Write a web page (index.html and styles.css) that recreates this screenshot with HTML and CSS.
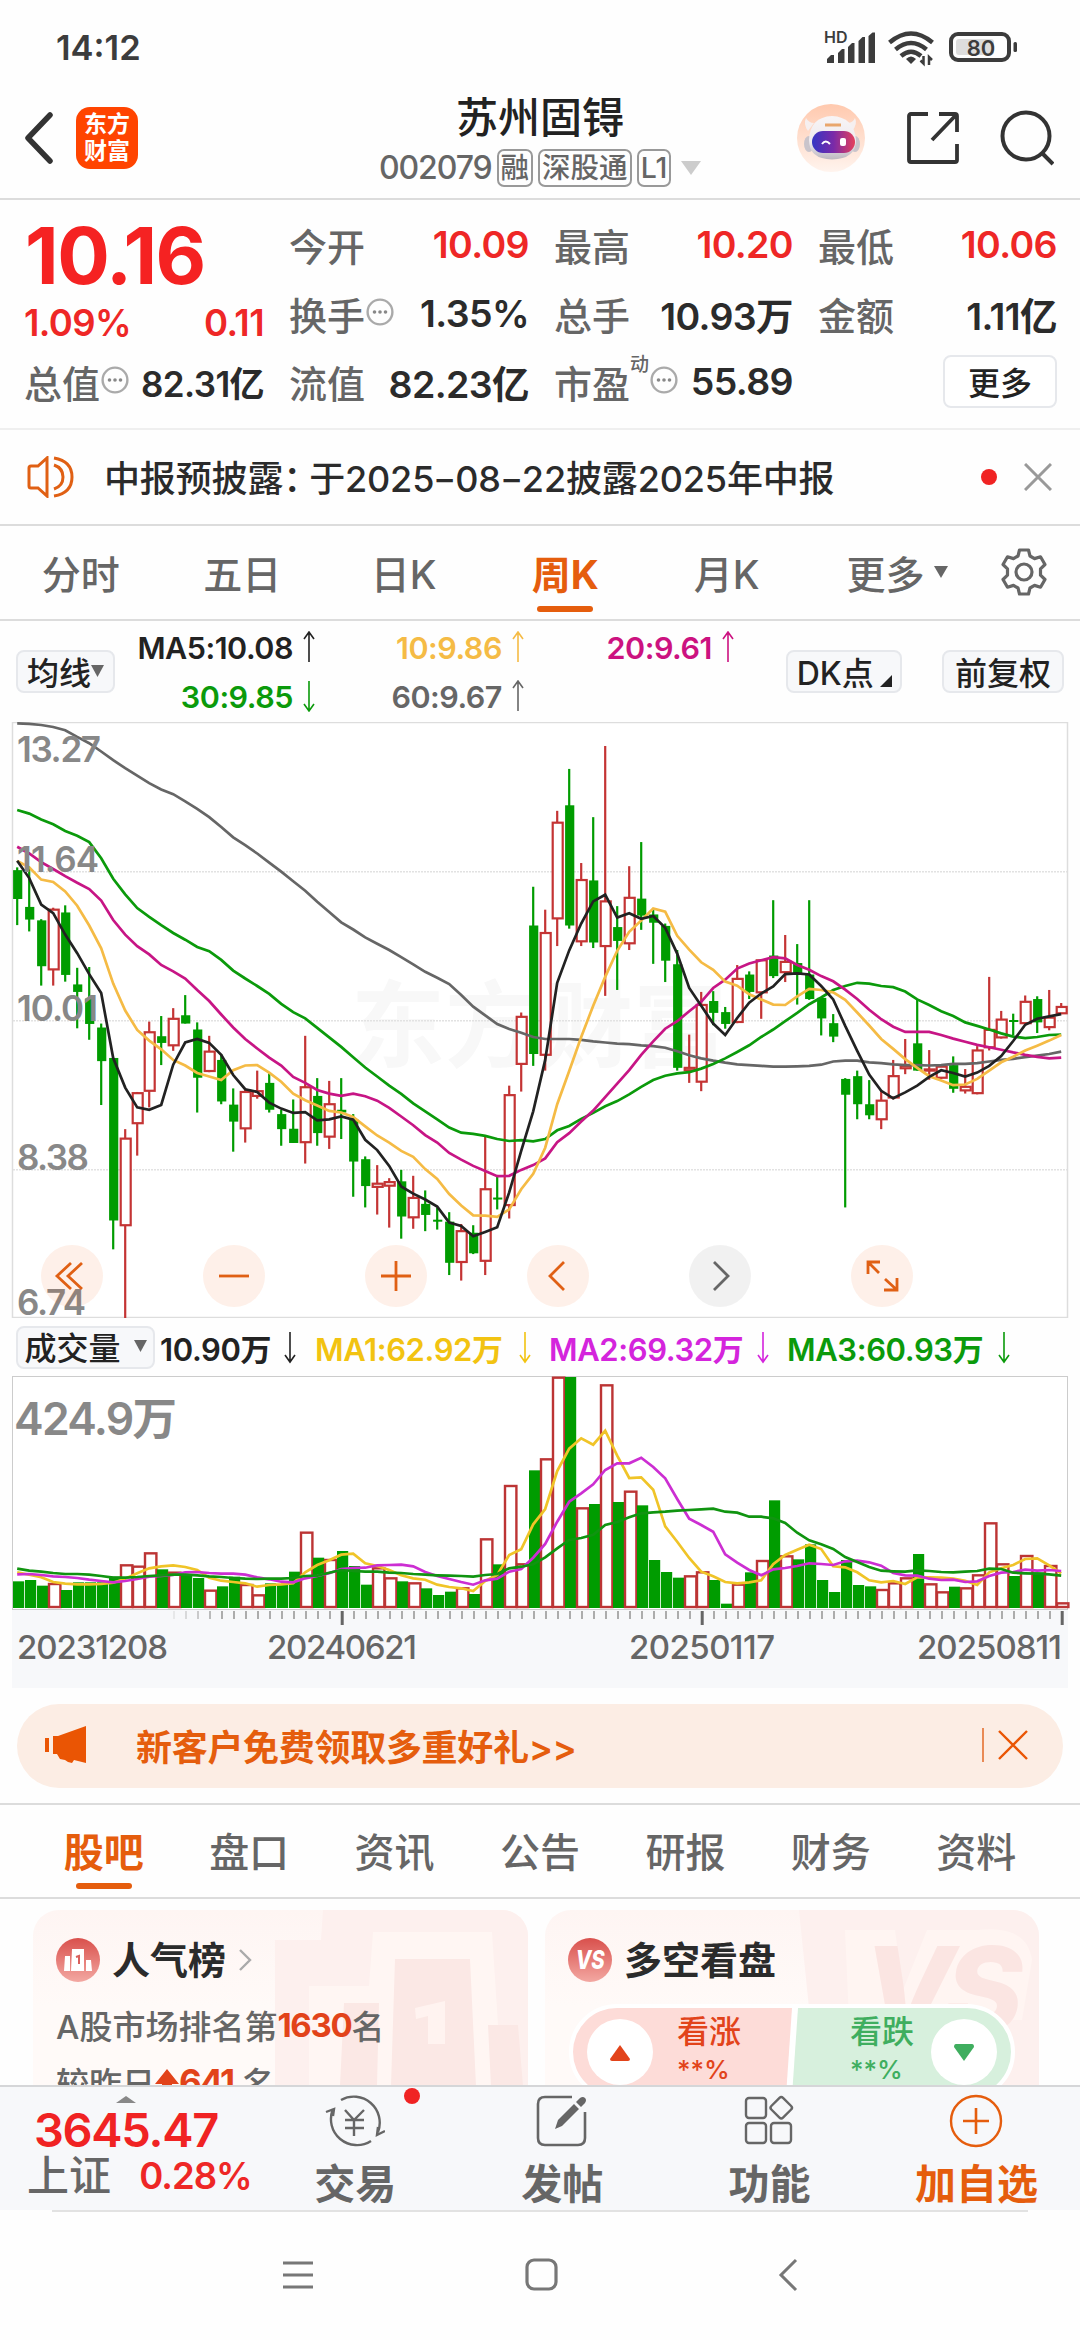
FILE: index.html
```html
<!doctype html>
<html lang="zh-CN">
  <head>
    <meta charset="UTF-8" />
    <meta name="viewport" content="width=device-width, initial-scale=1.0" />
    <title>苏州固锝 002079</title>
    <link rel="stylesheet" href="styles.css">
  </head>
  <body>
    <svg class="defs" width="0" height="0">
      <symbol id="up" viewBox="0 0 12 32"><path d="M6 31V2M1 8L6 1l5 7" fill="none" stroke="currentColor" stroke-width="1.6"/></symbol>
      <symbol id="down" viewBox="0 0 12 32"><path d="M6 1v29M1 24l5 7 5-7" fill="none" stroke="currentColor" stroke-width="1.6"/></symbol>
      <symbol id="info" viewBox="0 0 28 28"><circle cx="14" cy="14" r="12.4" fill="none" stroke="#aaa" stroke-width="2.4"/><g fill="#888"><circle cx="8.5" cy="14" r="1.8"/><circle cx="14" cy="14" r="1.8"/><circle cx="19.5" cy="14" r="1.8"/></g></symbol>
    </svg>

    <div class="status">
      <span class="time">14:12</span>
      <svg width="200" height="40" viewBox="820 28 200 40">
        <text x="824" y="43" font-size="16" font-weight="600" fill="#3c3c3c">HD</text>
        <g fill="#3c3c3c">
          <path d="M827 63v-4l4-4h3v8zM838 63V53l4-4h2.500v14zM848 63V47l4-4h2.500v20zM858.500 63V41l4-4h2.500v26zM868.500 63V36l4-3.500h2.500V63z"/>
          <path d="M911 64l-5-5q5-5 10 0z"/>
        </g>
        <g fill="none" stroke="#3c3c3c" stroke-width="4.500">
          <path d="M889.500 42.500q21.500-18 43 0M895.500 49.500q15.500-13 31 0M901 56q10-8.500 20 0"/>
          <path d="M923.500 56v7.500l-3-3M929 65v-8l3 3" stroke-width="2.500"/>
          <rect x="951" y="34" width="58" height="26" rx="7" stroke-width="4"/>
        </g>
        <rect x="956" y="39" width="38" height="16" rx="3" fill="#ddd"/>
        <rect x="1013.500" y="42" width="3.500" height="10" rx="1.500" fill="#3c3c3c"/>
        <text x="981" y="55.500" font-size="22" font-weight="600" text-anchor="middle" fill="#3c3c3c">80</text>
      </svg>
    </div>

    <header class="header">
      <div class="header-left">
        <svg width="30" height="52" viewBox="0 0 30 52"><path d="M26 3L4 26l22 23" fill="none" stroke="#333" stroke-width="5.500" stroke-linecap="round" stroke-linejoin="round"/></svg>
        <div class="logo"><span>东方</span><span>财富</span></div>
      </div>
      <div class="title">
        <h1>苏州固锝</h1>
        <div class="code">
          <span class="num">002079</span>
          <span class="chip">融</span>
          <span class="chip">深股通</span>
          <span class="chip">L1</span>
          <svg width="20" height="14"><path d="M0 0h20L10 14z" fill="#ccc"/></svg>
        </div>
      </div>
      <div class="header-right">
        <svg width="68" height="68" viewBox="0 0 68 68">
          <defs>
            <linearGradient id="skin" x1="0" y1="0" x2="0" y2="1"><stop offset="0" stop-color="#ffc9ae"/><stop offset="1" stop-color="#fff4ee"/></linearGradient>
            <linearGradient id="visor" x1="0" y1="0" x2="1" y2="0"><stop offset="0" stop-color="#3436c4"/><stop offset=".5" stop-color="#7a2aa8"/><stop offset="1" stop-color="#e5405c"/></linearGradient>
            <linearGradient id="helmet" x1="0" y1="0" x2="0" y2="1"><stop offset="0" stop-color="#f8f5f6"/><stop offset=".6" stop-color="#eeeaee"/><stop offset="1" stop-color="#bdb8c0"/></linearGradient>
          </defs>
          <circle cx="34" cy="34" r="34" fill="url(#skin)"/>
          <path d="M11 27Q6 20 9 14q3 5 8 5zM55 27q6-7 3-13-2 5-8 5z" fill="#f6efef"/>
          <ellipse cx="12" cy="40" rx="5" ry="8" fill="#c9c4cb"/><ellipse cx="58" cy="40" rx="5" ry="8" fill="#c9c4cb"/>
          <path d="M12 36Q13 13 35 12q22 1 24 24 0 19-24 19.500Q12 55 12 36z" fill="url(#helmet)"/>
          <path d="M28 21h16" stroke="#e9a66c" stroke-width="3"/>
          <rect x="15" y="27" width="43" height="22" rx="11" fill="url(#visor)"/>
          <path d="M25 40q3.500-5 8 0" fill="none" stroke="#fff" stroke-width="2"/><rect x="43" y="34" width="6" height="8" rx="2" fill="#fff"/>
        </svg>
        <svg width="54" height="54" viewBox="0 0 54 54"><path d="M22 3H5q-2 0-2 2v44q0 2 2 2h44q2 0 2-2V33M33 3h16q2 0 2 2v16M50 4L26 29" fill="none" stroke="#333" stroke-width="3.800"/></svg>
        <svg width="54" height="56" viewBox="0 0 54 56"><circle cx="26" cy="26" r="23.500" fill="none" stroke="#333" stroke-width="4"/><path d="M42 43l11 11" stroke="#333" stroke-width="4"/></svg>
      </div>
    </header>

    <section class="quote">
      <div class="cell price-cell"><b class="price">10.16</b></div>
      <div class="cell"><label>今开</label><span class="red">10.09</span></div>
      <div class="cell"><label>最高</label><span class="red">10.20</span></div>
      <div class="cell"><label>最低</label><span class="red">10.06</span></div>
      <div class="cell change"><span class="red">1.09%</span><span class="red">0.11</span></div>
      <div class="cell"><label>换手<svg width="28" height="28"><use href="#info"/></svg></label><span>1.35%</span></div>
      <div class="cell"><label>总手</label><span>10.93万</span></div>
      <div class="cell"><label>金额</label><span>1.11亿</span></div>
      <div class="cell"><label>总值<svg width="28" height="28"><use href="#info"/></svg></label><span class="tight">82.31亿</span></div>
      <div class="cell"><label>流值</label><span>82.23亿</span></div>
      <div class="cell"><label>市盈<sup>动</sup><svg width="28" height="28"><use href="#info"/></svg></label><span>55.89</span></div>
      <div class="cell end"><button class="more">更多</button></div>
    </section>

    <section class="notice">
      <svg width="48" height="42" viewBox="0 0 48 42"><path d="M2 12q0-2 2-2h7L20 2v38l-9-8H4q-2 0-2-2zM27 9q9 3 9 12t-9 12M27 2q18 3 18 19T27 40" fill="none" stroke="#e06014" stroke-width="3"/></svg>
      <p>中报预披露<i>：</i>于2025<em>-</em>08<em>-</em>22披露2025年中报</p>
      <span class="dot"></span>
      <svg width="28" height="28"><path d="M1 1l26 26M27 1L1 27" stroke="#999" stroke-width="3"/></svg>
    </section>

    <nav class="periods">
      <span>分时</span>
      <span>五日</span>
      <span>日K</span>
      <span class="active">周K</span>
      <span>月K</span>
      <span class="drop">更多<svg width="14" height="12"><path d="M0 0h14L7 12z" fill="#666"/></svg></span>
      <svg class="gear" width="48" height="50" viewBox="0 0 48 50"><path d="M19.500 3h9l1.500 6 4.500 2.600 6-1.800 4.500 7.700-4.500 4.300v6.400l4.500 4.300-4.500 7.700-6-1.800L30 41l-1.500 6h-9L18 41l-4.500-2.600-6 1.800L3 32.500l4.500-4.300v-6.400L3 17.500l4.500-7.700 6 1.800L18 9z" fill="none" stroke="#666" stroke-width="3.200" stroke-linejoin="round"/><circle cx="24" cy="25" r="8" fill="none" stroke="#666" stroke-width="3.200"/></svg>
    </nav>

    <section class="ma">
      <button>均线<svg width="13" height="12"><path d="M0 0h13L6.500 12z" fill="#666"/></svg></button>
      <div class="ma-values">
        <span class="c5">MA5:10.08<svg width="12" height="32"><use href="#up"/></svg></span>
        <span class="c10">10:9.86<svg width="12" height="32"><use href="#up"/></svg></span>
        <span class="c20">20:9.61<svg width="12" height="32"><use href="#up"/></svg></span>
        <span class="c30">30:9.85<svg width="12" height="32"><use href="#down"/></svg></span>
        <span class="c60">60:9.67<svg width="12" height="32"><use href="#up"/></svg></span>
      </div>
      <button class="dk">DK点<svg width="12" height="12"><path d="M12 0v12H0z" fill="#222"/></svg></button>
      <button class="fq">前复权</button>
    </section>

    <section class="kline">
      <svg id="kline" width="1080" height="596" viewBox="0 722 1080 596"></svg>
      <div class="tools">
        <span><svg width="62" height="62"><path d="M30 18L16 31l14 13M41 18L27 31l14 13"/></svg></span>
        <span><svg width="62" height="62"><path d="M16 31h30"/></svg></span>
        <span><svg width="62" height="62"><path d="M16 31h30M31 16v30"/></svg></span>
        <span><svg width="62" height="62"><path d="M37 17L23 31l14 14"/></svg></span>
        <span class="off"><svg width="62" height="62"><path d="M25 17l14 14-14 14"/></svg></span>
        <span><svg width="62" height="62"><path d="M17 29V17h12M17 17l11 11M46 33v12H33M46 45L34 34"/></svg></span>
      </div>
    </section>

    <section class="vol-head">
      <button>成交量<svg width="13" height="12"><path d="M0 0h13L6.500 12z" fill="#666"/></svg></button>
      <span class="v0">10.90万<svg width="12" height="36"><use href="#down"/></svg></span>
      <span class="v1">MA1:62.92万<svg width="12" height="36"><use href="#down"/></svg></span>
      <span class="v2">MA2:69.32万<svg width="12" height="36"><use href="#down"/></svg></span>
      <span class="v3">MA3:60.93万<svg width="12" height="36"><use href="#down"/></svg></span>
    </section>

    <section class="volume">
      <svg id="volume" width="1080" height="312" viewBox="0 1376 1080 312"></svg>
    </section>

    <section class="banner">
      <svg width="42" height="38" viewBox="0 0 42 38"><path d="M0 12h4v14H0zM8 10h5L41 0v37l-12-3-2 3-4-1-3-2-5-1-3-5H8z" fill="#ea5504"/></svg>
      <p>新客户免费领取多重好礼&gt;&gt;</p>
      <i></i>
      <svg width="30" height="30"><path d="M1 1l28 28M29 1L1 29" stroke="#ea5504" stroke-width="2.400"/></svg>
    </section>

    <nav class="sections">
      <span class="active">股吧</span>
      <span>盘口</span>
      <span>资讯</span>
      <span>公告</span>
      <span>研报</span>
      <span>财务</span>
      <span>资料</span>
    </nav>

    <section class="cards">
      <div class="card rank">
        <svg class="card-bg" width="495" height="176">
          <path d="M290 0h205v176H242V30h46z" fill="#fdf0ee"/>
          <path d="M340 22h119l10 154H276V76h60z" fill="#fff6f3"/>
          <path d="M362 49h75l6 127h-85zM311 93h35l-2 83h-37zM455 115h30l5 61h-32z" fill="#fbe8e5"/>
          <path d="M382 98l30-7v43h-17v-28l-12 3z" fill="#fff3f0"/>
        </svg>
        <h2>
          <svg width="44" height="44" viewBox="0 0 44 44"><defs><linearGradient id="badge" x1="0" y1="0" x2="0" y2="1"><stop offset="0" stop-color="#d9504c"/><stop offset="1" stop-color="#f3a8a2"/></linearGradient></defs><circle cx="22" cy="22" r="22" fill="url(#badge)"/><path d="M8 33l1-15h5v15zM15 33l1-22h12v22zM30 33V22h5l1 11z" fill="#fff"/><path d="M20 19l3-1v8" fill="none" stroke="#d9605c" stroke-width="2"/></svg>
          人气榜
          <svg class="chev" width="14" height="22"><path d="M2 1l10 10L2 21" fill="none" stroke="#aaa" stroke-width="2.400"/></svg>
        </h2>
        <p>A股市场排名第<b>1630</b>名</p>
        <p class="delta">较昨日<svg width="24" height="26"><path d="M12 0l12 15h-7v10H7V15H0z" fill="#e2431a"/></svg><b>641</b> 名</p>
      </div>
      <div class="card views">
        <svg class="card-bg" width="494" height="176">
          <path d="M254 0h240v176H272z" fill="#fdf0ee"/>
          <path d="M300 20h50l8 60 24-60h50q50-6 55 30l-10 60H304z" fill="#fff5f2"/>
          <text x="318" y="122" font-size="118" font-weight="800" font-style="italic" textLength="160" fill="#fbe5e2">VS</text>
        </svg>
        <h2>
          <svg width="44" height="44" viewBox="0 0 44 44"><circle cx="22" cy="22" r="22" fill="url(#badge)"/><text x="22" y="31" transform="translate(5 0) scale(.78 1)" font-size="26" font-weight="800" font-style="italic" text-anchor="middle" fill="#fff">VS</text></svg>
          多空看盘
        </h2>
        <div class="vote">
          <div class="bull"><span class="ball"><svg width="22" height="17"><path d="M11 1l10 14q0 2-2 2H3q-2 0-2-2z" fill="#e2431a"/></svg></span><div>看涨<small>**%</small></div></div>
          <div class="bear"><div>看跌<small>**%</small></div><span class="ball"><svg width="22" height="17"><path d="M11 17L1 3q0-3 2-3h16q2 0 2 3z" fill="#3fae5f"/></svg></span></div>
        </div>
      </div>
    </section>

    <footer class="bar">
      <div class="index">
        <svg width="20" height="7"><path d="M0 7L10 0l10 7z" fill="#888"/></svg>
        <b>3645.47</b>
        <div>上证<span>0.28%</span></div>
      </div>
      <div class="item">
        <svg width="60" height="56" viewBox="0 0 60 56"><g fill="none" stroke="#666" stroke-width="2.400"><path d="M16 7A26 26 0 0 1 53 39M46 48A26 26 0 0 1 8 16M1 19l8-3-1 7M60 38l-8 4 1-8M20 17l9 10 10-10M29 27v16M20 27h19M20 35h19"/></g></svg>
        <span class="dot"></span>
        交易
      </div>
      <div class="item">
        <svg width="54" height="56" viewBox="0 0 54 56"><path d="M37 4H10q-7 0-7 7v34q0 7 7 7h33q7 0 7-7V19" fill="none" stroke="#666" stroke-width="2.600"/><path d="M20 36l3-9 16-16 5 5-17 17zM41 9l4-4q3-2 5 0t0 5l-4 4z" fill="#666"/></svg>
        发帖
      </div>
      <div class="item">
        <svg width="54" height="56" viewBox="0 0 54 56"><g fill="none" stroke="#666" stroke-width="2.400"><rect x="4" y="5" width="20" height="20" rx="3"/><rect x="4" y="30" width="20" height="20" rx="3"/><rect x="29" y="30" width="20" height="20" rx="3"/><rect x="31" y="6.500" width="16.500" height="16.500" rx="2.500" transform="rotate(45 39.250 14.750)"/></g></svg>
        功能
      </div>
      <div class="item add">
        <svg width="54" height="56" viewBox="0 0 54 56"><path d="M27 15v26M14 28h26" stroke="#e55d0d" stroke-width="2.600"/><circle cx="27" cy="28" r="25" fill="none" stroke="#e55d0d" stroke-width="2.400"/></svg>
        加自选
      </div>
    </footer>

    <div class="sysnav">
      <svg width="32" height="28"><path d="M1 2h30M1 14h30M1 26h30" stroke="#777" stroke-width="3"/></svg>
      <svg width="34" height="34"><rect x="2" y="2" width="29" height="29" rx="7" fill="none" stroke="#777" stroke-width="3.200"/></svg>
      <svg width="20" height="34"><path d="M18 2L3 17l15 15" fill="none" stroke="#777" stroke-width="3"/></svg>
    </div>

    <script src="chart.js"></script>
  </body>
</html>
```

FILE: styles.css
```css
* {
  box-sizing: border-box;
}
body {
  margin: 0;
  width: 1080px;
  height: 2340px;
  overflow: hidden;
  background: #fefefe;
  color: #2b2b2b;
  font-family: Inter, "Noto Sans CJK SC", sans-serif;
  font-weight: 500;
}
svg {
  display: block;
  flex: none;
}
h1, h2, p {
  margin: 0;
}
.defs {
  position: absolute;
}
button {
  display: flex;
  align-items: center;
  justify-content: center;
  height: 43px;
  padding: 0 0 2px;
  border: 2px solid #e6e8ec;
  border-radius: 8px;
  background: #f7f8fa;
  color: #222;
  font: inherit;
  font-size: 32px;
  white-space: nowrap;
}
.red {
  color: #ee2726;
}

/* status bar */
.status {
  display: flex;
  justify-content: space-between;
  align-items: center;
  height: 95px;
  padding: 0 60px 0 56px;
}
.time {
  font-size: 34.5px;
  font-weight: 600;
  color: #3c3c3c;
}

/* header */
.header {
  display: grid;
  grid-template-columns: 340px 400px 340px;
  height: 105px;
  border-bottom: 2px solid #dcdcdc;
}
.header-left {
  display: flex;
  align-items: center;
  gap: 22px;
  padding: 0 0 18px 24px;
}
.logo {
  display: flex;
  flex-direction: column;
  align-items: center;
  justify-content: center;
  width: 62px;
  height: 62px;
  border-radius: 14px;
  background: #ff4400;
  color: #fff;
  font-size: 23px;
  line-height: 27px;
  font-weight: 600;
}
.title h1 {
  font-size: 42px;
  line-height: 46px;
  font-weight: 500;
  text-align: center;
  color: #222;
}
.code {
  display: flex;
  align-items: center;
  gap: 5px;
  margin: 8px 0 0 39px;
  color: #666;
}
.num {
  font-size: 32px;
  letter-spacing: -1.1px;
  line-height: 38px;
}
.chip {
  height: 38px;
  padding: 0 2px;
  border: 2px solid #999;
  border-radius: 7px;
  font-size: 28.5px;
  line-height: 33px;
}
.code svg {
  margin-left: 5px;
}
.header-right {
  display: flex;
  align-items: center;
  padding: 0 26px 17px 57px;
  justify-content: space-between;
}

/* quote */
.quote {
  display: grid;
  grid-template-columns: 240px 240px 239px 239px;
  grid-template-rows: 70px 68px 69px;
  column-gap: 25px;
  height: 230px;
  padding: 9px 24px 0;
  border-bottom: 2px solid #efefef;
  font-size: 38px;
}
.cell {
  display: flex;
  align-items: center;
  justify-content: space-between;
  white-space: nowrap;
  letter-spacing: -0.6px;
}
.cell > span {
  font-size: 37.5px;
  font-weight: 600;
}
.cell label {
  display: flex;
  align-items: center;
  color: #666;
  letter-spacing: 0;
}
.cell label svg {
  margin: -3px 0 0 1px;
}
.cell sup {
  margin: -35px 0 0 0;
  font-size: 19px;
  line-height: 19px;
}
.price {
  margin-left: 1px;
  padding-top: 23px;
  color: #f52222;
  font-size: 78px;
  letter-spacing: -1.5px;
}
.change {
  padding-top: 20px;
}
.change > span {
  font-size: 36.5px;
}
.cell > .tight {
  font-size: 35px;
}
.end {
  justify-content: flex-end;
}
.more {
  width: 114px;
  height: 53px;
  background: #fff;
}

/* notice */
.notice {
  display: flex;
  align-items: center;
  height: 96px;
  padding: 0 28px 0 27px;
  border-bottom: 2px solid #dcdcdc;
}
.notice p {
  flex: 1;
  margin: -2px 0 0 29px;
  font-size: 36px;
  letter-spacing: -0.15px;
}
.notice i {
  font-style: normal;
  margin-right: -10px;
}
.notice em {
  display: inline-block;
  width: 21px;
  font-style: normal;
  transform: scaleX(1.4);
  text-align: center;
}
.dot {
  width: 16px;
  height: 16px;
  border-radius: 50%;
  background: #f02323;
}
.notice .dot {
  margin-right: 27px;
}

/* period tabs */
.periods {
  display: flex;
  align-items: center;
  height: 95px;
  padding-bottom: 2px;
  border-bottom: 2px solid #dcdcdc;
}
.periods span {
  position: relative;
  width: 161.5px;
  text-align: center;
  font-size: 39px;
  color: #666;
}
.periods .drop {
  display: flex;
  align-items: center;
  gap: 9px;
  padding-left: 39px;
}
.gear {
  margin-left: 31px;
}
.active {
  font-weight: 700;
}
.periods .active, .sections .active {
  color: #e55d0d;
}
.active::after {
  content: "";
  position: absolute;
  left: 50%;
  bottom: -12px;
  width: 56px;
  height: 6px;
  margin-left: -28px;
  border-radius: 3px;
  background: #e55d0d;
}

/* moving averages */
.ma {
  display: flex;
  align-items: center;
  height: 101px;
  padding: 0 16px;
}
.ma > button:first-child {
  width: 99px;
}
.ma-values {
  display: grid;
  grid-template-columns: 200px 209px 210px;
  grid-template-rows: 49px 49px;
  width: 672px;
}
.ma-values span {
  display: flex;
  align-items: center;
  justify-content: flex-end;
  gap: 10px;
  font-size: 30.5px;
  font-weight: 600;
  letter-spacing: -0.5px;
  white-space: nowrap;
}
.c5 { color: #222; }
.c10 { color: #f5bb45; }
.c20 { color: #cc1280; }
.c30 { color: #0b9a0b; }
.c60 { color: #666; }
.dk {
  width: 116px;
  gap: 6px;
}
.dk svg {
  margin-top: 20px;
}
.fq {
  width: 122px;
  margin-left: 40px;
}

/* charts */
.kline {
  position: relative;
  height: 596px;
}
.tools {
  position: absolute;
  left: 41px;
  top: 523px;
  display: flex;
  gap: 100px;
}
.tools span {
  width: 62px;
  height: 62px;
  border-radius: 50%;
  background: rgba(240, 90, 10, 0.09);
}
.tools path {
  fill: none;
  stroke: #e06014;
  stroke-width: 2.8;
}
.tools .off {
  background: rgba(0, 0, 0, 0.055);
}
.tools .off path {
  stroke: #666;
}
.vol-head {
  display: flex;
  align-items: center;
  height: 58px;
  padding-left: 16px;
}
.vol-head button {
  width: 139px;
  gap: 13px;
}
.vol-head span {
  display: flex;
  align-items: center;
  justify-content: space-between;
  font-size: 31px;
  font-weight: 600;
  letter-spacing: -0.4px;
  white-space: nowrap;
}
.v0 { width: 136px; margin-left: 5px; color: #222; }
.v1 { width: 216px; margin-left: 19px; color: #f2c311; }
.v2 { width: 220px; margin-left: 18px; color: #d424dc; }
.v3 { width: 223px; margin-left: 18px; color: #0b9a0b; }
.volume {
  height: 328px;
}

/* banner */
.banner {
  display: flex;
  align-items: center;
  height: 84px;
  margin: 0 17px;
  padding: 0 35px 2px 28px;
  border-radius: 42px;
  background: #fcede4;
}
.banner p {
  flex: 1;
  margin-left: 49px;
  color: #e55d0d;
  font-size: 36px;
  letter-spacing: -0.3px;
  font-weight: 600;
}
.banner i {
  width: 2px;
  height: 34px;
  margin-right: 14px;
  background: #e98a55;
}

/* section tabs */
.sections {
  display: flex;
  align-items: center;
  height: 96px;
  margin-top: 15px;
  padding: 0 31px 2px;
  border-top: 2px solid #dcdcdc;
  border-bottom: 2px solid #dcdcdc;
}
.sections span {
  position: relative;
  flex: 1;
  text-align: center;
  font-size: 40px;
  color: #666;
}
.sections .active::after {
  bottom: -10px;
}

/* cards */
.cards {
  display: grid;
  grid-template-columns: 495px 494px;
  gap: 17px;
  height: 186px;
  padding: 11px 33px 0;
  overflow: hidden;
}
.card {
  position: relative;
  height: 240px;
  padding: 28px 23px 0;
  border-radius: 26px;
  background: linear-gradient(#fef5f3, #fffaf8 40%);
  overflow: hidden;
}
.card-bg {
  position: absolute;
  left: 0;
  top: 0;
}
.card h2 {
  position: relative;
  display: flex;
  align-items: center;
  gap: 12px;
  height: 44px;
  font-size: 38px;
  line-height: 38px;
}
.card p {
  position: relative;
  display: flex;
  align-items: center;
  height: 57px;
  font-size: 33px;
  color: #666;
  white-space: pre;
}
.card h2 + p {
  margin-top: 14px;
}
.card p b {
  color: #e2431a;
  letter-spacing: -1.3px;
}
.card .delta b {
  font-size: 35px;
  letter-spacing: -2px;
}
.vote {
  position: relative;
  display: flex;
  width: 446px;
  height: 96px;
  margin: 22px 0 0 1px;
  border: 4px solid #fff;
  border-radius: 48px;
  background: #fff;
  overflow: hidden;
}
.bull, .bear {
  display: flex;
  align-items: center;
  flex: 1;
  gap: 24px;
  font-size: 32px;
  line-height: 40px;
}
.bull {
  padding-left: 14px;
  background: #fddcd8;
  color: #e2431a;
  clip-path: polygon(0 0, 100% 0, calc(100% - 6px) 100%, 0 100%);
}
.bear {
  justify-content: flex-end;
  gap: 17px;
  padding-right: 14px;
  background: #d7f0dd;
  color: #3fae5f;
  clip-path: polygon(6px 0, 100% 0, 100% 100%, 0 100%);
}
.bull div, .bear div {
  margin-top: -5px;
}
.vote small {
  display: block;
  font-size: 26px;
  line-height: 36px;
}
.ball {
  display: flex;
  align-items: center;
  justify-content: center;
  width: 66px;
  height: 66px;
  border-radius: 50%;
  background: #fff;
}

/* bottom bar */
.bar {
  display: flex;
  position: relative;
  height: 125px;
  border-top: 2px solid #d5d6d8;
  background: #f7f8fa;
}
.index {
  display: flex;
  flex-direction: column;
  width: 252px;
  padding: 9px 0 0 27px;
}
.index > svg {
  margin-left: 89px;
}
.index b {
  margin-left: 7px;
  color: #f02323;
  font-size: 47px;
  font-weight: 600;
  line-height: 54px;
  letter-spacing: -1.3px;
}
.index div {
  display: flex;
  align-items: center;
  justify-content: space-between;
  font-size: 42px;
  line-height: 38px;
  color: #666;
}
.index div span {
  color: #ee2726;
  font-size: 36.5px;
  font-weight: 600;
  letter-spacing: -1px;
}
.item {
  position: relative;
  display: flex;
  flex-direction: column;
  align-items: center;
  width: 207.3px;
  padding-top: 6px;
  font-size: 41px;
  line-height: 70px;
  font-weight: 600;
  color: #666;
}
.item .dot {
  position: absolute;
  left: 152px;
  top: 1px;
}
.add {
  font-weight: 700;
  color: #e55d0d;
}

/* system navigation */
.sysnav {
  display: flex;
  align-items: center;
  justify-content: space-between;
  height: 127px;
  margin: 0 52px;
  padding: 0 230px 0 230px;
  border-top: 2px solid #e2e2e2;
}
.sysnav svg:nth-child(2) {
  margin-right: 8px;
}
```

FILE: chart.js
```js
// Bars are [direction, high, body top, body bottom, low], measured down the panel.
const bars = `g398,405,478,544 g398,498,530,560 g529,532,648,697 r500,505,656,697 g494,512,670,687 g652,694,713,805
g650,730,794,834 g793,803,888,999 g880,880,1291,1364 r1060,1084,1303,1540 r966,969,1045,1127 r788,815,963,1005
g774,825,842,898 r754,781,848,862 g721,772,793,793 g790,808,930,1018 r824,864,913,916 g870,885,990,997
g957,998,1041,1117 r957,966,1058,1094 r912,964,976,983 g919,943,1011,1018 g1011,1022,1060,1102 g985,1059,1095,1095
r824,954,1093,1147 g931,976,1070,1102 r938,997,1079,1110 g931,1011,1018,1085 g1022,1035,1142,1231 g1129,1136,1204,1258
r1151,1198,1206,1276 r1184,1194,1203,1309 g1163,1192,1281,1337 r1178,1234,1283,1312 g1215,1249,1277,1318 g1258,1289,1293,1314
g1270,1294,1398,1429 r1300,1318,1396,1443 g1303,1322,1374,1376 r1078,1212,1393,1429 g1178,1233,1237,1263 r950,974,1252,1286
r765,776,895,965 g447,545,870,900 r505,564,872,912 r255,285,527,597 g149,241,545,553 r387,430,585,597
g271,431,588,602 r91,484,597,723 g496,549,584,708 r395,475,590,607 g334,477,520,556 g505,517,538,642
g540,546,634,688 g607,643,905,912 r821,905,911,943 r713,746,940,964 g711,736,766,797 g751,764,794,806
r645,680,789,792 g661,669,713,731 r630,633,714,781 g481,621,673,678 r569,637,663,688 g592,640,668,745
g481,669,731,733 g728,728,780,823 g769,792,826,840 g931,933,973,1258 g912,926,997,1035 g936,997,1025,1035
r963,988,1035,1060 r885,926,980,985 r832,900,906,921 g733,843,912,912 r860,909,912,935 r897,902,930,933
g876,898,958,968 r908,953,962,970 r850,861,969,972 r675,809,853,861 r761,783,828,831 g768,784,788,823
r722,738,792,795 g724,731,790,817 r708,778,802,810 r741,751,767,769`.split(/\s+/).map(s => [s[0], ...s.slice(1).split(',').map(Number)]);

const priceLines = [
  ['#666', [34,35,38,43,51,68,84,105,127,147,166,185,201,213,231,250,271,296,322,342,363,386,409,433,457,485,511,537,555,575,591,607,625,643,662,677,693,721,750,772,794,807,816,827,832,832,832,834,838,841,844,845,848,850,854,863,873,881,887,892,896,898,900,902,902,901,900,897,889,887,887,891,893,896,898,898,899,898,895,895,893,889,885,882,878,874,870,864]],
  ['#0b9a0b', [253,262,277,289,306,318,334,375,427,466,501,523,544,564,581,599,610,632,659,679,698,718,743,764,780,804,828,852,878,904,927,950,971,995,1015,1035,1056,1069,1072,1077,1085,1090,1088,1091,1085,1063,1052,1034,1019,1002,989,972,953,936,925,919,916,907,895,881,865,848,827,808,787,766,744,727,708,698,690,692,698,701,712,732,746,762,774,790,799,808,818,826,830,827,822,821]],
  ['#c71585', [346,363,385,402,420,437,453,482,531,568,597,618,645,661,679,708,736,770,803,832,856,879,899,928,943,961,970,976,970,977,988,1006,1028,1050,1075,1094,1120,1137,1153,1166,1179,1178,1163,1151,1134,1093,1070,1041,1013,979,945,911,872,838,806,787,762,738,703,682,654,641,633,625,628,645,657,673,686,707,731,758,782,801,814,814,814,822,831,839,847,853,859,866,872,877,881,879]],
  ['#f5bb45', [382,398,429,435,459,495,545,603,692,760,809,836,858,885,899,918,927,936,911,899,898,917,940,970,987,1000,1014,1018,1029,1053,1076,1094,1115,1130,1161,1186,1224,1253,1278,1279,1282,1263,1212,1173,1107,997,913,827,748,675,609,561,532,502,510,571,606,638,657,687,697,719,732,745,746,724,705,708,714,733,765,798,832,857,883,905,926,937,949,947,933,912,891,877,861,849,836,822]],
  ['#222', [381,425,492,514,568,615,668,716,880,955,1005,1011,999,897,841,832,842,872,923,959,966,993,1008,1019,1017,1038,1035,1028,1036,1087,1113,1153,1205,1223,1238,1256,1296,1305,1331,1320,1308,1220,1115,1015,885,690,608,540,484,467,525,514,528,521,551,616,703,748,793,822,779,740,717,699,668,666,669,698,732,799,862,922,963,982,967,950,928,911,918,927,917,900,875,837,796,781,775,769]]
];

const volumes = [784,780,797,792,810,787,787,787,770,736,740,700,748,758,768,774,812,799,770,795,826,790,793,755,638,713,720,693,738,794,745,775,784,790,805,825,815,805,822,658,733,498,733,451,418,173,171,565,552,196,546,515,556,720,756,773,769,757,780,851,794,757,723,541,709,718,673,780,816,720,795,799,810,790,775,702,793,817,800,805,766,610,733,768,708,757,738,850];

const volumeLines = [
  ['#f0c428', [757,764,772,786,791,793,793,792,788,776,760,745,739,736,741,750,773,782,786,790,800,795,793,790,757,735,721,704,701,730,738,750,766,775,779,794,801,805,813,783,765,705,688,613,567,453,386,355,374,332,407,474,472,509,619,665,714,755,769,786,790,787,781,733,705,689,674,687,739,742,757,781,787,783,792,772,772,773,776,782,795,757,745,735,717,715,736,760]],
  ['#cc2ed2', [763,762,765,769,771,774,779,783,787,783,777,770,768,765,757,756,759,761,761,764,772,778,785,787,775,768,760,747,744,743,736,735,734,739,756,768,777,786,794,781,776,755,747,713,672,605,545,520,493,450,430,430,413,441,475,537,596,615,635,703,728,750,766,748,744,738,730,732,735,724,722,727,737,759,766,767,776,780,779,786,784,768,758,756,749,752,750,753]],
  ['#109410', [746,752,755,759,762,762,764,768,773,773,771,768,766,764,764,766,769,771,774,776,777,776,776,774,768,767,758,750,753,755,755,758,759,762,764,766,767,768,770,765,762,745,740,733,712,685,660,654,644,615,606,592,580,577,575,572,570,568,566,575,578,590,590,595,609,638,661,673,687,711,726,741,752,754,755,751,753,756,757,755,753,746,747,758,760,761,763,767]]
];

const x = i => 17.2 + i * 12;
const priceY = v => 710 + v / 2.529;
const volY = v => 1320 + v / 3;

function rect(x, y, w, h, attrs) {
  return `<rect x="${x}" y="${y}" width="${w}" height="${h}" ${attrs}/>`;
}
function text(x, y, size, str, attrs) {
  return `<text x="${x}" y="${y}" font-size="${size}" ${attrs || 'fill="#888"'}>${str}</text>`;
}
function polyline(line, scale) {
  const points = line[1].map((v, i) => x(i).toFixed(1) + ',' + scale(v).toFixed(1)).join(' ');
  return `<polyline points="${points}" fill="none" stroke="${line[0]}" stroke-width="2.7"/>`;
}

function drawKline() {
  let out = rect(12.5, 722.5, 1055, 595, 'fill="#fff" stroke="#ddd" stroke-width="1.5"');
  out += text(351, 1060, 94, '东方财富', 'fill="#f8f8f8" font-weight="700"');
  [409, 786, 1163].forEach(v => {
    out += `<path d="M13 ${priceY(v)}H1067" stroke="#e2e2e2" stroke-width="1.5" stroke-dasharray="2 1"/>`;
  });
  bars.forEach(([dir, high, top, bottom, low], i) => {
    const [h, t, b, l] = [high, top, bottom, low].map(priceY);
    if (dir === 'g') {
      out += rect(x(i) - 1.1, h, 2.2, l - h, 'fill="#009c00"');
      out += rect(x(i) - 4.1, t, 9.2, Math.max(b - t, 2), 'fill="#009c00"');
    } else {
      out += rect(x(i) - 1.1, h, 2.2, t - h, 'fill="#c43434"');
      out += rect(x(i) - 1.1, b, 2.2, Math.max(l - b, 0), 'fill="#c43434"');
      out += rect(x(i) - 4.5, t, 10, Math.max(b - t, 1), 'fill="#fff" stroke="#c43434" stroke-width="2.2"');
    }
  });
  out += priceLines.map(line => polyline(line, priceY)).join('');
  [['13.27', 762, 84], ['11.64', 872, 82], ['10.01', 1021, 81], ['8.38', 1170, 72], ['6.74', 1315, 69]].forEach(([s, y, w]) => {
    out += text(17, y, 35, s, `fill="#888" font-weight="600" textLength="${w}"`);
  });
  document.getElementById('kline').innerHTML = out;
}

function drawVolume() {
  let out = rect(12, 1609, 1056, 79, 'fill="#f7f8fa"');
  out += rect(12.5, 1376.5, 1055, 233, 'fill="#fff" stroke="#ccc"');
  out += text(14, 1435, 44.5, '424.9万', 'fill="#888" font-weight="600" textLength="163"');
  volumes.forEach((v, i) => {
    const y = volY(v);
    if (bars[i][0] === 'g') {
      out += rect(x(i) - 4.2, y, 11.2, 1608 - y, 'fill="#009c00"');
    } else {
      out += rect(x(i) - 4.2, y, 11.4, 1607 - y, 'fill="#fff" stroke="#bc3434" stroke-width="2.4"');
    }
  });
  out += volumeLines.map(line => polyline(line, volY)).join('');
  for (let i = 13; i < 88; i++) {
    const major = i === 27 || i === 57 || i === 87;
    const fade = Math.min(1, (i - 12) / 5);
    out += rect(x(i) + (major ? -0.5 : 0), 1611, major ? 3 : 1.6, major ? 14 : 8, `fill="${major ? '#666' : '#999'}" opacity="${fade}"`);
  }
  out += text(17, 1659, 33, '20231208', 'fill="#666" textLength="151"');
  out += text(342, 1659, 33, '20240621', 'fill="#666" textLength="150" text-anchor="middle"');
  out += text(702, 1659, 33, '20250117', 'fill="#666" textLength="146" text-anchor="middle"');
  out += text(1062, 1659, 33, '20250811', 'fill="#666" textLength="145" text-anchor="end"');
  document.getElementById('volume').innerHTML = out;
}

drawKline();
drawVolume();
```
